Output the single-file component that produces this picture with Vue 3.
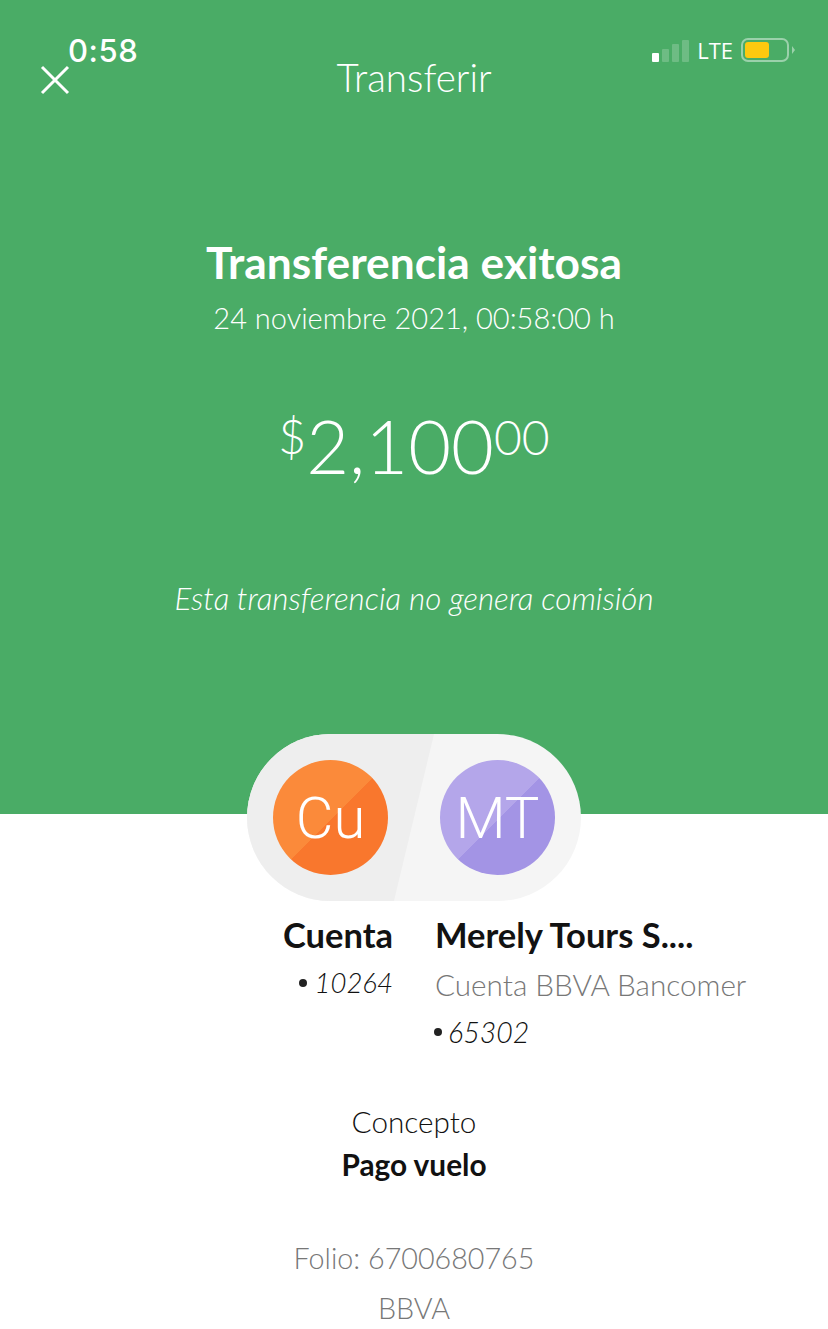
<template>
  <div class="screen">
    <section class="hero">
      <div class="status">
        <span class="time">0:58</span>
        <div class="status-right">
          <div class="signal">
            <i class="on"></i><i></i><i></i><i></i>
          </div>
          <span class="lte">LTE</span>
          <div class="battery"><b></b></div>
          <span class="nub"></span>
        </div>
      </div>
      <header class="nav">
        <svg class="close" width="30" height="30" viewBox="0 0 30 30">
          <path d="M2 2 L28 28 M28 2 L2 28" stroke="#fff" stroke-width="3" fill="none" />
        </svg>
        <span class="nav-title">Transferir</span>
      </header>
      <h1 class="title">Transferencia exitosa</h1>
      <p class="date">24 noviembre 2021, 00:58:00 h</p>
      <div class="amount"><sup class="cur">$</sup>2,100<sup class="cents">00</sup></div>
      <p class="note">Esta transferencia no genera comisión</p>
    </section>

    <div class="pill">
      <div class="avatar orange">Cu</div>
      <div class="avatar purple">MT</div>
    </div>

    <section class="parties">
      <div class="party from">
        <div class="name">Cuenta</div>
        <div class="acct"><span class="dot"></span>10264</div>
      </div>
      <div class="party to">
        <div class="name">Merely Tours S....</div>
        <div class="bank">Cuenta BBVA Bancomer</div>
        <div class="acct"><span class="dot"></span>65302</div>
      </div>
    </section>

    <section class="concept">
      <div class="label">Concepto</div>
      <div class="value">Pago vuelo</div>
    </section>

    <section class="foot">
      <div>Folio: 6700680765</div>
      <div class="foot-bank">BBVA</div>
    </section>
  </div>
</template>

<script setup>
</script>

<style>
html, body { margin: 0; background: #fff; }
</style>

<style scoped>
.screen { width: 828px; height: 1329px; overflow: hidden; background: #fff; font-family: Lato, "Open Sans", sans-serif; color: #111; }
p, h1 { margin: 0; }

.hero { position: relative; height: 814px; background: #4aac66; color: #fff; text-align: center; box-sizing: border-box; padding-top: 55px; }

.status { position: absolute; top: 30px; left: 68px; right: 33px; display: flex; justify-content: space-between; align-items: center; height: 40px; }
.time { font-family: Inter, sans-serif; font-size: 31px; font-weight: 500; letter-spacing: 0.6px; }
.status-right { display: flex; align-items: center; }
.signal { display: flex; align-items: flex-end; gap: 3px; height: 24px; margin-right: 8px; }
.signal i { width: 7px; background: rgba(255,255,255,0.2); border-radius: 1px; }
.signal i:nth-child(1) { height: 9px; background: #fff; }
.signal i:nth-child(2) { height: 13px; }
.signal i:nth-child(3) { height: 18px; }
.signal i:nth-child(4) { height: 22px; }
.lte { font-family: "Open Sans", sans-serif; font-size: 22px; font-weight: 500; margin-right: 8px; }
.battery { width: 40px; height: 16px; border: 2px solid rgba(255,255,255,0.45); border-radius: 7px; padding: 2px; display: flex; }
.battery b { width: 24px; background: #fdc90f; border-radius: 3px; }
.nub { width: 0; height: 0; margin-left: 3px; border-left: 3px solid rgba(255,255,255,0.45); border-top: 4px solid transparent; border-bottom: 4px solid transparent; }

.nav { position: relative; height: 44px; display: flex; justify-content: center; align-items: center; }
.close { position: absolute; left: 40px; top: 10px; }
.nav-title { font-size: 38.5px; font-weight: 300; }

.title { margin-top: 138px; font-size: 44.3px; line-height: 50px; font-weight: 700; }
.date { margin-top: 13px; font-size: 29px; line-height: 36px; font-weight: 300; }
.amount { margin-top: 65px; height: 90px; font-size: 74px; line-height: 90px; font-weight: 300; }
.amount sup { vertical-align: baseline; position: relative; font-size: 48px; top: -20px; }
.amount .cents { font-size: 48px; top: -19px; }
.note { margin-top: 89px; font-size: 31.3px; line-height: 36px; font-style: italic; font-weight: 300; }

.pill { position: relative; z-index: 1; width: 334px; height: 167px; margin: -80px 0 0 247px; border-radius: 84px; background: #f5f5f5; overflow: hidden; display: flex; align-items: center; gap: 52px; padding-left: 26px; box-sizing: border-box; }
.pill::before { content: ""; position: absolute; top: 0; bottom: 0; left: -20px; width: 187px; background: #eeeeee; transform: skewX(-13.5deg); }
.avatar { position: relative; flex: none; width: 115px; height: 115px; border-radius: 50%; color: #fff; font-family: Roboto, sans-serif; font-weight: 300; font-size: 58px; display: flex; align-items: center; justify-content: center; }
.orange { background: linear-gradient(135deg, #fb8a3a 51%, #f9772d 51%); }
.purple { background: linear-gradient(135deg, #b4a6ea 51%, #a394e5 51%); }

.parties { display: flex; margin-top: 13px; }
.party { box-sizing: border-box; }
.from { width: 393px; text-align: right; }
.to { margin-left: 42px; }
.name { font-size: 34.5px; line-height: 42px; font-weight: 700; color: #121212; }
.bank { margin-top: 10px; font-size: 29.7px; line-height: 38px; font-weight: 300; color: #777; }
.acct { font-size: 28px; line-height: 38px; font-style: italic; font-weight: 300; display: flex; align-items: center; gap: 9px; }
.from .acct { margin-top: 8px; justify-content: flex-end; }
.from .acct { gap: 8px; font-size: 27.5px; }
.to .acct { margin-top: 9px; gap: 6px; margin-left: -1px; font-size: 28.5px; }
.dot { width: 8px; height: 8px; border-radius: 50%; background: #222; }

.concept { margin-top: 52px; text-align: center; }
.label { font-size: 29.7px; line-height: 38px; font-weight: 300; }
.value { margin-top: 5px; font-size: 29.8px; line-height: 38px; font-weight: 700; }

.foot { margin-top: 55px; text-align: center; font-size: 28.7px; font-weight: 300; line-height: 38px; color: #777; }
.foot-bank { margin-top: 12px; }
</style>
